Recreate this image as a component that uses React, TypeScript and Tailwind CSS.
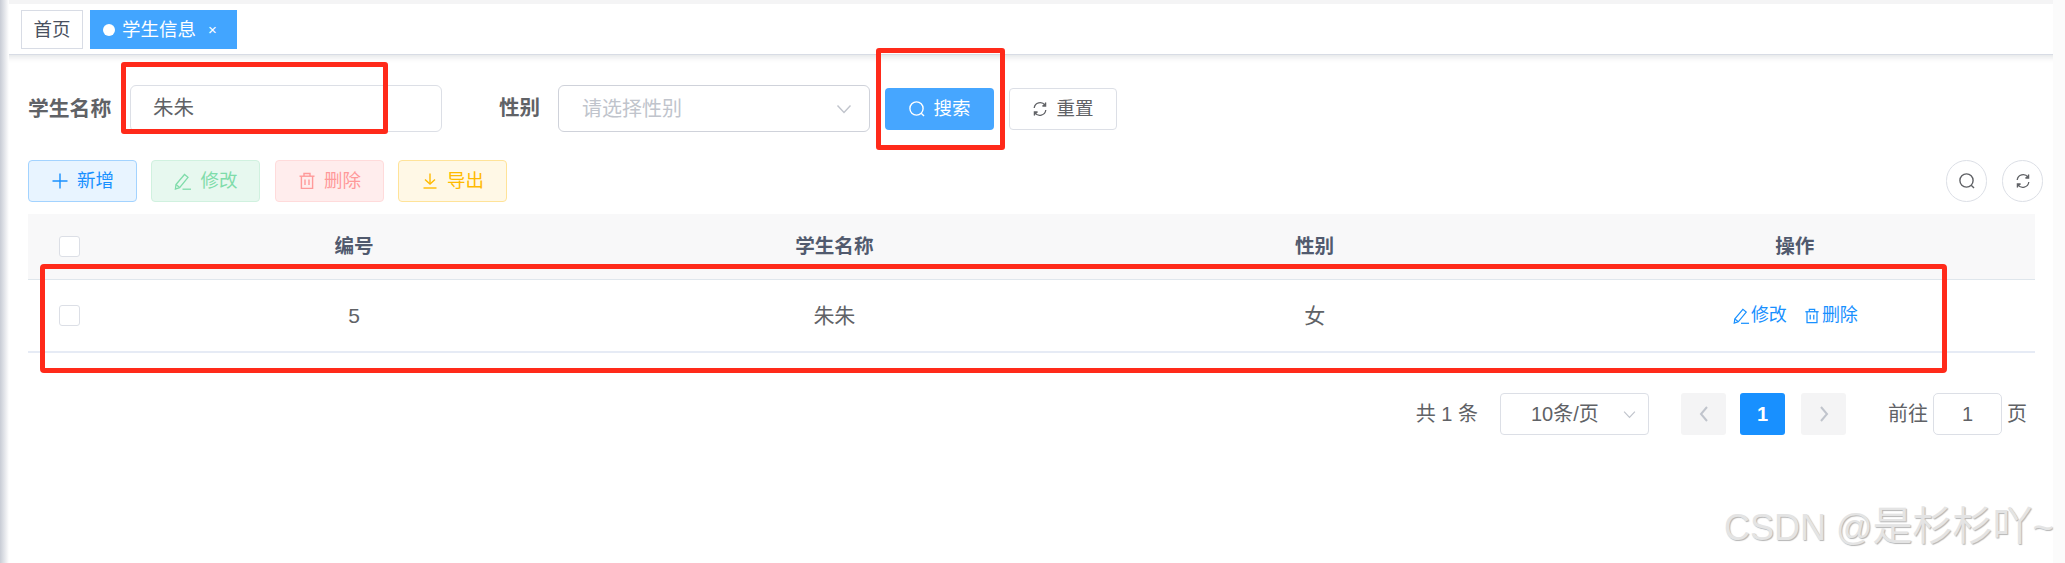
import React from "react";

const Search = ({ c = "currentColor", s = 18 }: { c?: string; s?: number }) => (
  <svg width={s} height={s} viewBox="0 0 18 18" fill="none" stroke={c} strokeWidth="1.4" className="shrink-0">
    <circle cx="8.5" cy="8.5" r="6.6" />
    <path d="M13.2 13.2 L16 16" />
  </svg>
);
const Refresh = ({ c = "currentColor", s = 16 }: { c?: string; s?: number }) => (
  <svg width={s} height={s} viewBox="0 0 16 16" fill="none" stroke={c} strokeWidth="1.3" className="shrink-0">
    <path d="M2.2 7A6 6 0 0 1 13 4.2" />
    <path d="M13.8 9A6 6 0 0 1 3 11.8" />
    <path d="M13.6 1.6V5H10.4" fill={c} />
    <path d="M2.4 14.4V11H5.6" fill={c} />
  </svg>
);
const Edit = ({ c = "currentColor", s = 19 }: { c?: string; s?: number }) => (
  <svg width={s} height={s} viewBox="0 0 19 19" fill="none" stroke={c} strokeWidth="1.3" className="shrink-0">
    <path d="M3 12.5 L11.5 2.5 L15 5.3 L6.6 15.6 L2.4 17 Z" />
    <path d="M3 12.5 L6.6 15.6" />
    <path d="M9.5 17.2 H18" />
  </svg>
);
const Trash = ({ c = "currentColor", s = 18 }: { c?: string; s?: number }) => (
  <svg width={s} height={s} viewBox="0 0 18 18" fill="none" stroke={c} strokeWidth="1.4" className="shrink-0">
    <path d="M1.5 4.2 H16.5" />
    <path d="M6 4 V1.5 H12 V4" />
    <path d="M3.4 4.2 V16.4 H14.6 V4.2" />
    <path d="M7 7.5 V13 M11 7.5 V13" />
  </svg>
);
const Download = ({ c = "currentColor", s = 18 }: { c?: string; s?: number }) => (
  <svg width={s} height={s} viewBox="0 0 18 18" fill="none" stroke={c} strokeWidth="1.4" className="shrink-0">
    <path d="M9 1.5 V11.5" />
    <path d="M4 7.5 L9 12 L14 7.5" />
    <path d="M2.5 16 H15.5" />
  </svg>
);
const Plus = ({ c = "currentColor", s = 18 }: { c?: string; s?: number }) => (
  <svg width={s} height={s} viewBox="0 0 18 18" fill="none" stroke={c} strokeWidth="1.4" className="shrink-0">
    <path d="M9 1.5 V16.5 M1.5 9 H16.5" />
  </svg>
);
const Chevron = ({ c, s = 18 }: { c: string; s?: number }) => (
  <svg width={s} height={s} viewBox="0 0 18 18" fill="none" stroke={c} strokeWidth="1.4" className="shrink-0">
    <path d="M2.5 5.5 L9 12.5 L15.5 5.5" />
  </svg>
);
const Side = ({ d, c }: { d: string; c: string }) => (
  <svg width="14" height="18" viewBox="0 0 14 18" fill="none" stroke={c} strokeWidth="2" className="shrink-0">
    <path d={d} />
  </svg>
);

const Check = () => (
  <span className="block w-[21px] h-[21px] rounded-[3px] border border-[#dcdfe6] bg-white" />
);

const tool = "w-[109px] h-[42px] flex items-center justify-center gap-[8px] rounded-[4px] border text-[18.5px]";

export default function App() {
  return (
    <div
      className="relative w-[2065px] h-[563px] overflow-hidden bg-white text-[#606266]"
      style={{ fontFamily: '"Liberation Sans", "Noto Sans CJK SC", sans-serif' }}
    >
      {/* top bar */}
      <div className="h-[55px] pt-[6px] pl-[21px] flex gap-[7px] border-b border-[#d8dce5] bg-white shadow-[0_2px_6px_rgba(0,21,41,0.12)] border-t-[4px] border-t-[#f4f4f5] box-border">
        <div className="w-[62px] h-[39px] flex items-center justify-center border border-[#d8dce5] text-[18.5px] text-[#495060]">
          首页
        </div>
        <div className="w-[147px] h-[39px] flex items-center pl-[13px] bg-[#42a5ff] text-white text-[18.5px]">
          <span className="w-[12px] h-[12px] rounded-full bg-white mr-[7px]" />
          学生信息
          <span className="ml-[12px] text-[15px] leading-none">×</span>
        </div>
      </div>

      {/* search */}
      <div className="flex items-center h-[47px] mt-[30px] pl-[28px]">
        <span className="w-[102px] text-[20.8px] font-bold text-[#606266]">学生名称</span>
        <div className="w-[312px] h-[47px] flex items-center pl-[22px] border border-[#dcdfe6] rounded-[6px] text-[20.5px]">
          朱朱
        </div>
        <span className="ml-[57px] w-[59px] text-[20.5px] font-bold text-[#606266]">性别</span>
        <div className="w-[312px] h-[47px] flex items-center justify-between pl-[23px] pr-[16px] border border-[#cfd2da] rounded-[6px] text-[20px] text-[#c0c4cc]">
          请选择性别
          <Chevron c="#c0c4cc" />
        </div>
        <button className="ml-[15px] mt-[1px] w-[109px] h-[42px] flex items-center justify-center gap-[7px] rounded-[4px] bg-[#46a6ff] text-white text-[18.5px]">
          <Search c="#ffffff" />
          搜索
        </button>
        <button className="ml-[15px] mt-[1px] w-[108px] h-[42px] flex items-center justify-center gap-[8px] rounded-[4px] border border-[#dcdfe6] text-[18.5px] text-[#606266]">
          <Refresh c="#606266" s={16} />
          重置
        </button>
      </div>

      {/* toolbar */}
      <div className="flex items-center mt-[28px] pl-[28px] pr-[22px]">
        <button className={`${tool} bg-[#e8f4ff] border-[#a3d3ff] text-[#1890ff]`}>
          <Plus />
          新增
        </button>
        <button className={`${tool} ml-[14px] bg-[#e7f8ef] border-[#d0f1df] text-[#7fdcaa]`}>
          <Edit s={19} />
          修改
        </button>
        <button className={`${tool} ml-[15px] bg-[#ffeded] border-[#ffdbdb] text-[#ff9a9a]`}>
          <Trash />
          删除
        </button>
        <button className={`${tool} ml-[14px] bg-[#fff8e6] border-[#ffe399] text-[#ffba00]`}>
          <Download />
          导出
        </button>
        <div className="ml-auto flex gap-[15px]">
          <span className="w-[41px] h-[42px] rounded-full border border-[#dcdfe6] flex items-center justify-center">
            <Search c="#606266" />
          </span>
          <span className="w-[41px] h-[42px] rounded-full border border-[#dcdfe6] flex items-center justify-center">
            <Refresh c="#606266" s={16} />
          </span>
        </div>
      </div>

      {/* table */}
      <div className="ml-[28px] w-[2007px] mt-[12px]">
        <div className="grid grid-cols-[86px_repeat(4,1fr)] h-[66px] bg-[#f8f8f9] border-b border-[#dfe6ec] items-center text-[#515a6e] text-[19.6px] font-bold text-center">
          <span className="flex pl-[31px]">
            <Check />
          </span>
          <span>编号</span>
          <span>学生名称</span>
          <span>性别</span>
          <span>操作</span>
        </div>
        <div className="grid grid-cols-[86px_repeat(4,1fr)] h-[73px] border-b-2 border-[#e6ebf5] items-center text-[#606266] text-[21px] text-center">
          <span className="flex pl-[31px]">
            <Check />
          </span>
          <span>5</span>
          <span>朱朱</span>
          <span>女</span>
          <span className="flex justify-center items-center gap-[17px] text-[#1890ff] text-[18px]">
            <span className="flex items-center gap-[1px]">
              <Edit s={18} />
              修改
            </span>
            <span className="flex items-center gap-[2px]">
              <Trash s={16} />
              删除
            </span>
          </span>
        </div>
      </div>

      {/* pagination */}
      <div className="flex items-center h-[42px] mt-[40px] justify-end pr-[38px] text-[20px] text-[#606266]">
        <span>共 1 条</span>
        <div className="ml-[22px] w-[149px] h-[42px] flex items-center justify-between pl-[30px] pr-[11px] border border-[#dcdfe6] rounded-[4px]">
          10条/页
          <Chevron c="#c0c4cc" s={15} />
        </div>
        <span className="ml-[32px] w-[45px] h-[42px] rounded-[3px] bg-[#f4f4f5] flex items-center justify-center">
          <Side d="M10 2 L4 9 L10 16" c="#c0c4cc" />
        </span>
        <span className="ml-[14px] w-[45px] h-[42px] rounded-[3px] bg-[#1890ff] text-white font-bold flex items-center justify-center">
          1
        </span>
        <span className="ml-[16px] w-[45px] h-[42px] rounded-[3px] bg-[#f4f4f5] flex items-center justify-center">
          <Side d="M4 2 L10 9 L4 16" c="#c0c4cc" />
        </span>
        <span className="ml-[42px]">前往</span>
        <span className="ml-[5px] w-[69px] h-[42px] border border-[#dcdfe6] rounded-[5px] flex items-center justify-center">
          1
        </span>
        <span className="ml-[5px]">页</span>
      </div>

      {/* window edges */}
      <div className="absolute left-0 top-0 bottom-0 w-[9px] bg-gradient-to-r from-[#c8ccd5] to-white" />
      <div className="absolute right-0 top-0 bottom-0 w-[12px] bg-[#fbfbfb]" />

      {/* annotation boxes */}
      <div className="absolute left-[121px] top-[62px] w-[267px] h-[72px] border-[5px] border-[#ff2a1a] rounded-[3px]" />
      <div className="absolute left-[876px] top-[48px] w-[129px] h-[102px] border-[5px] border-[#ff2a1a] rounded-[3px]" />
      <div className="absolute left-[40px] top-[264px] w-[1907px] h-[109px] border-[5px] border-[#ff2a1a] rounded-[4px]" />

      {/* watermark */}
      <div
        className="absolute left-[1724px] top-[501px] text-[36px] leading-[50px] whitespace-nowrap text-[#e4e4e4]"
        style={{ textShadow: "1px 1px 1px #b5b5b5" }}
      >
        CSDN @<span className="text-[40px]">是杉杉吖</span>~
      </div>
    </div>
  );
}
